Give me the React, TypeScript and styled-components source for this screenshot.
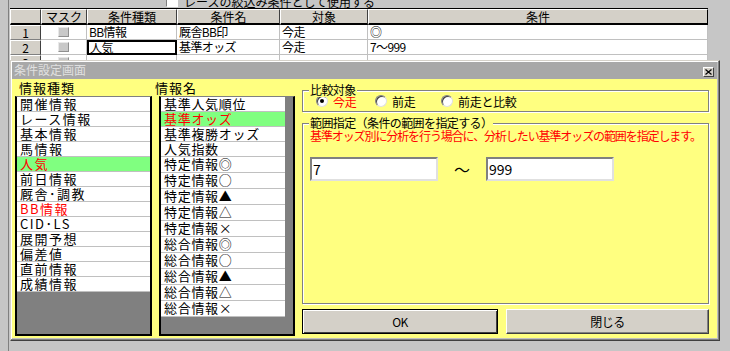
import React from 'react';
import styled, { createGlobalStyle } from 'styled-components';

const GlobalStyle = createGlobalStyle`
  html, body {
    margin: 0;
    padding: 0;
    background: #c6c6c6;
  }
  body {
    font-family: 'Noto Sans CJK JP', 'Noto Sans', sans-serif;
  }
`;

const Screen = styled.div`
  position: relative;
  width: 730px;
  height: 351px;
  overflow: hidden;
  background: #c6c6c6;
  font-family: 'Noto Sans CJK JP', 'Noto Sans', sans-serif;
  font-size: 12px;
  color: #000;
`;

const Frame = styled.div`
  margin-left: 8px;
  height: 351px;
  border-left: 1px solid #808080;
  padding-left: 1px;
`;

const TopStrip = styled.div`
  height: 8px;
  overflow: hidden;
  padding-left: 156px;
`;

const TopInner = styled.div`
  display: flex;
  align-items: center;
  gap: 6px;
  height: 14px;
  margin-top: -6px;
  font-size: 12px;
  color: #000;
`;

const SmallCheck = styled.span`
  width: 10px;
  height: 10px;
  background: #fff;
  border: 1px solid #808080;
  border-right-color: #fff;
  border-bottom-color: #fff;
`;

const Grid = styled.div`
  display: grid;
  grid-template-columns: 31px 46px 90px 103px 88px 340px;
  width: 698px;
  border-top: 1px solid #000;
  background: #fff;
`;

const HeadCell = styled.div<{ $last?: boolean }>`
  box-sizing: border-box;
  height: 16px;
  background: #d4d0c8;
  border-left: 1px solid #fff;
  border-top: 1px solid #fff;
  border-right: 1px solid ${(p) => (p.$last ? '#000' : '#404040')};
  border-bottom: 2px solid #000;
  text-align: center;
  font-size: 12px;
  line-height: 13px;
`;

const RowHead = styled.div`
  box-sizing: border-box;
  height: 15px;
  background: #d4d0c8;
  border-left: 1px solid #fff;
  border-top: 1px solid #fff;
  border-right: 1px solid #404040;
  border-bottom: 1px solid #808080;
  text-align: center;
  font-size: 12px;
  line-height: 13px;
`;

const Cell = styled.div<{ $focus?: boolean }>`
  box-sizing: border-box;
  height: 15px;
  padding-left: 2px;
  border-right: 1px solid #c0c0c0;
  border-bottom: 1px solid #c0c0c0;
  font-size: 12px;
  line-height: 14px;
  letter-spacing: -0.6px;
  white-space: nowrap;
  overflow: hidden;
  ${(p) => p.$focus && 'border: 2px solid #000; line-height: 11px; padding-left: 1px;'}
`;

const MaskCell = styled(Cell)`
  display: flex;
  align-items: center;
  justify-content: center;
  padding-left: 0;
`;

const MaskBox = styled.span`
  box-sizing: border-box;
  width: 11px;
  height: 10px;
  background: #c8c8c8;
  border: 1px solid #e8e8e8;
  border-right-color: #909090;
  border-bottom-color: #909090;
`;

const Dialog = styled.div`
  position: absolute;
  left: 10px;
  top: 60px;
  width: 710px;
  height: 281px;
  box-sizing: border-box;
  display: flex;
  flex-direction: column;
  background: #c0c0c0;
  border-top: 1px solid #d4d0c8;
  border-left: 1px solid #d4d0c8;
  border-right: 1px solid #404040;
  border-bottom: 1px solid #404040;
  box-shadow: inset -1px -1px 0 #808080, inset 1px 1px 0 #fff;
  padding: 1px 2px 2px 1px;
`;

const TitleBar = styled.div`
  display: flex;
  align-items: flex-end;
  justify-content: space-between;
  height: 17px;
  background: #a8a8a8;
  color: #e0e0e0;
  font-size: 12px;
  line-height: 16px;
  padding: 0 3px 1px 2px;
  box-sizing: border-box;
`;

const CloseBtn = styled.span`
  box-sizing: border-box;
  width: 11px;
  height: 10px;
  margin-bottom: 1px;
  background: #d4d0c8;
  border: 1px solid #fff;
  border-right-color: #404040;
  border-bottom-color: #404040;
  display: flex;
  align-items: center;
  justify-content: center;
`;

const Body = styled.div`
  flex: 1;
  display: flex;
  background: #ffff80;
  padding: 0 6px 2px 3px;
  gap: 7px;
`;

const Column = styled.div<{ $w: number }>`
  flex: 0 0 ${(p) => p.$w}px;
  width: ${(p) => p.$w}px;
  display: flex;
  flex-direction: column;
`;

const ListLabel = styled.div<{ $shift?: number }>`
  height: 17px;
  font-size: 13px;
  line-height: 17px;
  letter-spacing: 1px;
  padding-left: 4px;
  margin-left: ${(p) => p.$shift || 0}px;
`;

const ListBox = styled.div<{ $strip?: boolean }>`
  flex: 1;
  box-sizing: border-box;
  background: #808080;
  border-top: 1px solid #808080;
  border-left: 2px solid #000;
  border-right: 2px solid #000;
  border-bottom: 2px solid #000;
  padding-right: ${(p) => (p.$strip ? 8 : 0)}px;
`;

const Item = styled.div<{ $sel?: boolean; $red?: boolean; $tall?: boolean; $spacing: number }>`
  box-sizing: border-box;
  height: ${(p) => (p.$tall ? 16 : 15)}px;
  background: ${(p) => (p.$sel ? '#80ff80' : '#fff')};
  color: ${(p) => (p.$sel || p.$red ? '#ff0000' : '#000')};
  border-bottom: 1px solid #c0c0c0;
  padding-left: 3px;
  font-size: 13px;
  line-height: 14px;
  letter-spacing: ${(p) => p.$spacing}px;
  white-space: nowrap;
  overflow: hidden;
`;

const GroupBox = styled.div<{ $h: number }>`
  position: relative;
  box-sizing: border-box;
  height: ${(p) => p.$h}px;
  margin-top: 11px;
  border: 1px solid #808080;
  box-shadow: inset 1px 1px 0 #fff, 1px 1px 0 #fff;
`;

const Legend = styled.span`
  position: absolute;
  left: 6px;
  top: -8px;
  padding: 0 1px;
  background: #ffff80;
  font-size: 12px;
  line-height: 14px;
  letter-spacing: -0.6px;
  white-space: nowrap;
`;

const RadioRow = styled.div`
  display: flex;
  align-items: center;
  height: 100%;
  padding-left: 13px;
`;

const RadioItem = styled.label<{ $w: number; $red?: boolean }>`
  display: flex;
  align-items: center;
  gap: 5px;
  flex: 0 0 ${(p) => p.$w}px;
  color: ${(p) => (p.$red ? '#ff0000' : '#000')};
  font-size: 12px;
  letter-spacing: -0.3px;
  white-space: nowrap;
`;

const RadioCircle = styled.span<{ $on?: boolean }>`
  box-sizing: border-box;
  width: 12px;
  height: 12px;
  border-radius: 50%;
  background: #fff;
  border: 1px solid #808080;
  border-right-color: #e0e0e0;
  border-bottom-color: #e0e0e0;
  box-shadow: inset 1px 1px 0 #404040;
  display: flex;
  align-items: center;
  justify-content: center;
  &::after {
    content: '';
    width: 4px;
    height: 4px;
    border-radius: 50%;
    background: ${(p) => (p.$on ? '#000' : 'transparent')};
  }
`;

const Note = styled.div`
  color: #ff0000;
  font-size: 12px;
  line-height: 14px;
  letter-spacing: -1.1px;
  padding: 5px 0 0 7px;
  white-space: nowrap;
`;

const RangeRow = styled.div`
  display: flex;
  align-items: center;
  margin-top: 14px;
  padding-left: 7px;
`;

const Field = styled.div`
  box-sizing: border-box;
  flex: 0 0 128px;
  height: 24px;
  background: #fff;
  border: 2px solid #404040;
  border-top-color: #808080;
  border-left-color: #808080;
  border-right-color: #e0e0e0;
  border-bottom-color: #e0e0e0;
  font-size: 14px;
  line-height: 20px;
  padding-left: 1px;
`;

const Tilde = styled.div`
  flex: 0 0 48px;
  text-align: center;
  font-size: 16px;
  line-height: 20px;
`;

const ButtonRow = styled.div`
  display: flex;
  gap: 8px;
  margin-top: 5px;
`;

const Button = styled.div<{ $w: number; $default?: boolean }>`
  box-sizing: border-box;
  flex: 0 0 ${(p) => p.$w}px;
  height: 25px;
  background: #d4d0c8;
  border: 1px solid ${(p) => (p.$default ? '#000' : '#fff')};
  ${(p) => !p.$default && 'border-right-color: #404040; border-bottom-color: #404040;'}
  box-shadow: ${(p) =>
    p.$default ? 'inset 1px 1px 0 #fff, inset -1px -1px 0 #404040' : 'inset -1px -1px 0 #808080'};
  display: flex;
  align-items: center;
  justify-content: center;
  font-size: 12px;
  letter-spacing: -0.5px;
`;

const kinds = [
  '開催情報',
  'レース情報',
  '基本情報',
  '馬情報',
  '人気',
  '前日情報',
  '厩舎･調教',
  'BB情報',
  'CID･LS',
  '展開予想',
  '偏差値',
  '直前情報',
  '成績情報',
];

const names = [
  '基準人気順位',
  '基準オッズ',
  '基準複勝オッズ',
  '人気指数',
  '特定情報◎',
  '特定情報○',
  '特定情報▲',
  '特定情報△',
  '特定情報×',
  '総合情報◎',
  '総合情報○',
  '総合情報▲',
  '総合情報△',
  '総合情報×',
];

const rows = [
  { no: '1', kind: 'BB情報', name: '厩舎BB印', target: '今走', cond: '◎' },
  { no: '2', kind: '人気', name: '基準オッズ', target: '今走', cond: '7～999' },
  { no: '3', kind: '', name: '', target: '', cond: '' },
];

export default function App(): JSX.Element {
  return (
    <Screen>
      <GlobalStyle />
      <Frame>
        <TopStrip>
          <TopInner>
            <SmallCheck />
            <span>レースの絞込み条件として使用する</span>
          </TopInner>
        </TopStrip>

        <Grid>
          <HeadCell />
          <HeadCell>マスク</HeadCell>
          <HeadCell>条件種類</HeadCell>
          <HeadCell>条件名</HeadCell>
          <HeadCell>対象</HeadCell>
          <HeadCell $last>条件</HeadCell>
          {rows.map((r, i) => (
            <React.Fragment key={r.no}>
              <RowHead>{r.no}</RowHead>
              <MaskCell>
                <MaskBox />
              </MaskCell>
              <Cell $focus={i === 1}>{r.kind}</Cell>
              <Cell>{r.name}</Cell>
              <Cell>{r.target}</Cell>
              <Cell>{r.cond}</Cell>
            </React.Fragment>
          ))}
        </Grid>
      </Frame>

      <Dialog>
        <TitleBar>
          <span>条件設定画面</span>
          <CloseBtn>
            <svg width="7" height="6" viewBox="0 0 7 6">
              <path d="M0.5 0.5 L6.5 5.5 M6.5 0.5 L0.5 5.5" stroke="#000" strokeWidth="1.2" />
            </svg>
          </CloseBtn>
        </TitleBar>
        <Body>
          <Column $w={137}>
            <ListLabel>情報種類</ListLabel>
            <ListBox>
              {kinds.map((k, i) => (
                <Item key={k} $sel={i === 4} $red={i === 7} $spacing={1.5}>
                  {k}
                </Item>
              ))}
            </ListBox>
          </Column>
          <Column $w={136}>
            <ListLabel $shift={-8}>情報名</ListLabel>
            <ListBox $strip>
              {names.map((n, i) => (
                <Item key={n} $sel={i === 1} $tall={i >= 4} $spacing={0.7}>
                  {n}
                </Item>
              ))}
            </ListBox>
          </Column>
          <Column $w={407}>
            <GroupBox $h={22}>
              <Legend>比較対象</Legend>
              <RadioRow>
                <RadioItem $w={59} $red>
                  <RadioCircle $on />
                  今走
                </RadioItem>
                <RadioItem $w={66}>
                  <RadioCircle />
                  前走
                </RadioItem>
                <RadioItem $w={90}>
                  <RadioCircle />
                  前走と比較
                </RadioItem>
              </RadioRow>
            </GroupBox>
            <GroupBox $h={181}>
              <Legend>範囲指定（条件の範囲を指定する）</Legend>
              <Note>基準オッズ別に分析を行う場合に、分析したい基準オッズの範囲を指定します。</Note>
              <RangeRow>
                <Field>7</Field>
                <Tilde>～</Tilde>
                <Field>999</Field>
              </RangeRow>
            </GroupBox>
            <ButtonRow>
              <Button $w={196} $default>
                OK
              </Button>
              <Button $w={203}>閉じる</Button>
            </ButtonRow>
          </Column>
        </Body>
      </Dialog>
    </Screen>
  );
}
